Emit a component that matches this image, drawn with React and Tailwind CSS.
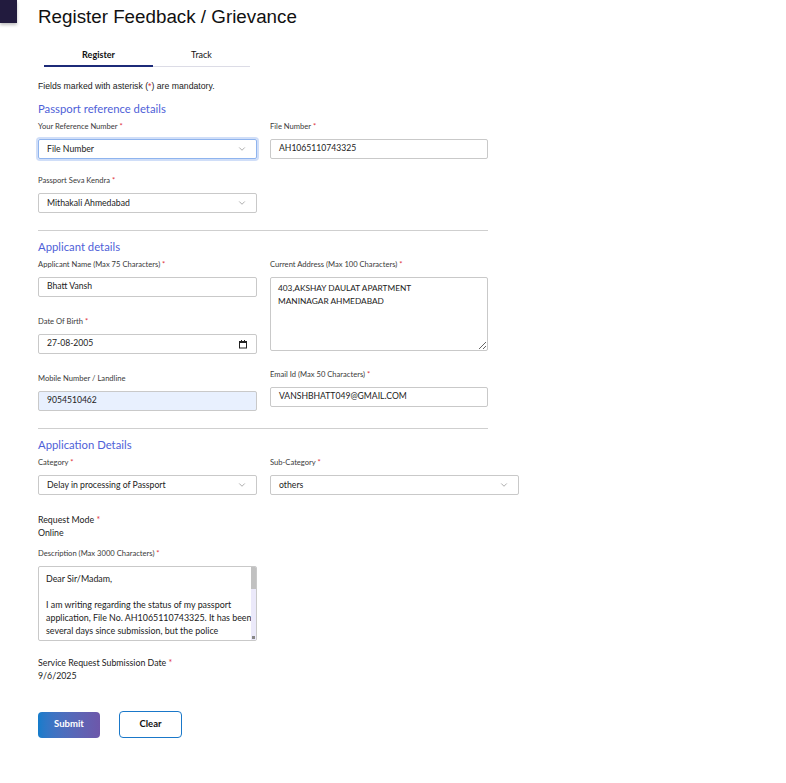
import React from 'react';
import { ChevronDown } from 'lucide-react';

const Req = () => <span className="text-[#e0323a]"> *</span>;

function Label({ children, required, className = '' }) {
  return (
    <div className={`text-[7.6px] leading-[10px] text-[#3a3a3a] ${className}`}>
      {children}
      {required && <Req />}
    </div>
  );
}

function Field({ value, className = '' }) {
  return (
    <div className={`h-[20px] border border-[#c9c9c9] rounded-[2px] px-[8px] flex items-center text-[8.6px] text-[#222] ${className}`}>
      {value}
    </div>
  );
}

function Select({ value, focused, className = '' }) {
  return (
    <div
      className={`h-[20px] rounded-[2px] pl-[8px] pr-[9px] flex items-center justify-between text-[8.7px] text-[#222] ${
        focused
          ? 'border border-[#8fb4ee] shadow-[0_0_0_2px_rgba(120,160,235,0.35)]'
          : 'border border-[#c9c9c9]'
      } ${className}`}
    >
      <span>{value}</span>
      <ChevronDown size={10} strokeWidth={1.3} className="text-[#666]" />
    </div>
  );
}

function Heading({ children }) {
  return <h2 className="text-[11.3px] leading-[16px] text-[#4f5fd8]">{children}</h2>;
}

export default function App() {
  const letter = [
    'Dear Sir/Madam,',
    '\u00a0',
    'I am writing regarding the status of my passport',
    'application, File No. AH1065110743325. It has been',
    'several days since submission, but the police',
    'verification has not yet been completed and I kindly',
  ];

  return (
    <div className="relative min-h-[783px] bg-white font-['Lato','Liberation_Sans',sans-serif]">
      {/* cropped sidebar corner */}
      <div className="absolute top-0 left-0 w-[17px] h-[23px] bg-[#221b3e] shadow-[0_2px_3px_rgba(0,0,0,0.25)]" />

      <div className="pl-[38px] pt-[6px]">
        <h1 className="font-['Liberation_Sans',Arial,sans-serif] text-[18.8px] leading-[22px] text-[#111]">
          Register Feedback / Grievance
        </h1>

        {/* Tabs */}
        <div className="ml-[6px] mt-[20px] w-[206px] flex border-b border-[#dcdce6]">
          <div className="w-[109px] text-center text-[9px] font-bold text-[#111] pb-[3px] border-b-2 border-[#1c2a78] -mb-px">
            Register
          </div>
          <div className="w-[97px] text-center text-[9px] text-[#111] pb-[3px]">Track</div>
        </div>

        <p className="mt-[14px] font-['Liberation_Sans',Arial,sans-serif] text-[8.7px] leading-[11px] text-[#222]">
          Fields marked with asterisk (<span className="text-[#e0323a]">*</span>) are mandatory.
        </p>

        {/* Passport reference details */}
        <div className="mt-[9px] w-[450px]">
          <Heading>Passport reference details</Heading>
          <div className="mt-[4px] flex gap-[13px]">
            <div className="w-[219px] flex flex-col">
              <Label required>Your Reference Number</Label>
              <Select value="File Number" focused className="mt-[8px]" />
              <Label required className="mt-[16px]">Passport Seva Kendra</Label>
              <Select value="Mithakali Ahmedabad" className="mt-[8px]" />
            </div>
            <div className="w-[218px] flex flex-col">
              <Label required>File Number</Label>
              <Field value="AH1065110743325" className="mt-[8px]" />
            </div>
          </div>
          <div className="mt-[17px] border-t border-[#cfcfcf]" />
        </div>

        {/* Applicant details */}
        <div className="mt-[8px] w-[450px]">
          <Heading>Applicant details</Heading>
          <div className="mt-[4px] flex gap-[13px]">
            <div className="w-[219px] flex flex-col">
              <Label required>Applicant Name (Max 75 Characters)</Label>
              <Field value="Bhatt Vansh" className="mt-[8px]" />
              <Label required className="mt-[19px]">Date Of Birth</Label>
              <div className="mt-[8px] h-[20px] border border-[#c9c9c9] rounded-[2px] pl-[8px] pr-[8px] flex items-center justify-between text-[8.6px] text-[#222]">
                <span>27-08-2005</span>
                <svg width="10" height="10" viewBox="0 0 10 10">
                  <rect x="1.5" y="2.5" width="7" height="6.5" fill="none" stroke="#222" strokeWidth="1" />
                  <rect x="1.5" y="2.5" width="7" height="1.5" fill="#222" />
                  <line x1="3.5" y1="1" x2="3.5" y2="3" stroke="#222" strokeWidth="1" />
                  <line x1="6.5" y1="1" x2="6.5" y2="3" stroke="#222" strokeWidth="1" />
                </svg>
              </div>
              <Label className="mt-[19px]">Mobile Number / Landline</Label>
              <Field value="9054510462" className="mt-[8px] bg-[#e8f0fe]" />
            </div>
            <div className="w-[218px] flex flex-col">
              <Label required>Current Address (Max 100 Characters)</Label>
              <textarea
                readOnly
                value={'403,AKSHAY DAULAT APARTMENT\nMANINAGAR AHMEDABAD'}
                className="mt-[8px] h-[74px] border border-[#c9c9c9] rounded-[2px] px-[7px] py-[4px] text-[8.3px] leading-[13px] text-[#222] outline-none resize"
              />
              <Label required className="mt-[18px]">Email Id (Max 50 Characters)</Label>
              <Field value="VANSHBHATT049@GMAIL.COM" className="mt-[8px] text-[8.3px]" />
            </div>
          </div>
          <div className="mt-[17px] border-t border-[#cfcfcf]" />
        </div>

        {/* Application Details */}
        <div className="mt-[8px]">
          <Heading>Application Details</Heading>
          <div className="mt-[4px] flex gap-[13px]">
            <div className="w-[219px] flex flex-col">
              <Label required>Category</Label>
              <Select value="Delay in processing of Passport" className="mt-[8px]" />
            </div>
            <div className="w-[249px] flex flex-col">
              <Label required>Sub-Category</Label>
              <Select value="others" className="mt-[8px]" />
            </div>
          </div>

          <div className="mt-[18px] text-[8.8px] leading-[13px] text-[#222]">
            Request Mode<Req />
            <div>Online</div>
          </div>

          <Label required className="mt-[9px]">Description (Max 3000 Characters)</Label>
          <div className="mt-[8px] w-[219px] h-[75px] border border-[#c9c9c9] rounded-[2px] flex overflow-hidden">
            <div className="flex-1 px-[7px] pt-[5px] text-[8.9px] leading-[13px] text-[#222] whitespace-nowrap overflow-hidden">
              {letter.map((l, i) => (
                <div key={i}>{l}</div>
              ))}
            </div>
            <div className="w-[5px] bg-[#ebe9fa] flex flex-col justify-between">
              <div className="h-[22px] bg-[#c1c1c1]" />
              <div className="h-[3px] w-[3px] mx-auto mb-[1px] bg-[#888]" />
            </div>
          </div>

          <div className="mt-[15px] text-[8.8px] leading-[13px] text-[#222]">
            Service Request Submission Date<Req />
            <div>9/6/2025</div>
          </div>

          <div className="mt-[30px] flex gap-[19px]">
            <button className="w-[62px] h-[26px] rounded-[4px] bg-gradient-to-r from-[#137ccb] to-[#6d57aa] text-white text-[9.5px] font-bold">
              Submit
            </button>
            <button className="w-[63px] h-[27px] -mt-px rounded-[4px] border border-[#1a78c9] bg-white text-[#111] text-[9.5px] font-bold">
              Clear
            </button>
          </div>
        </div>
      </div>
    </div>
  );
}
